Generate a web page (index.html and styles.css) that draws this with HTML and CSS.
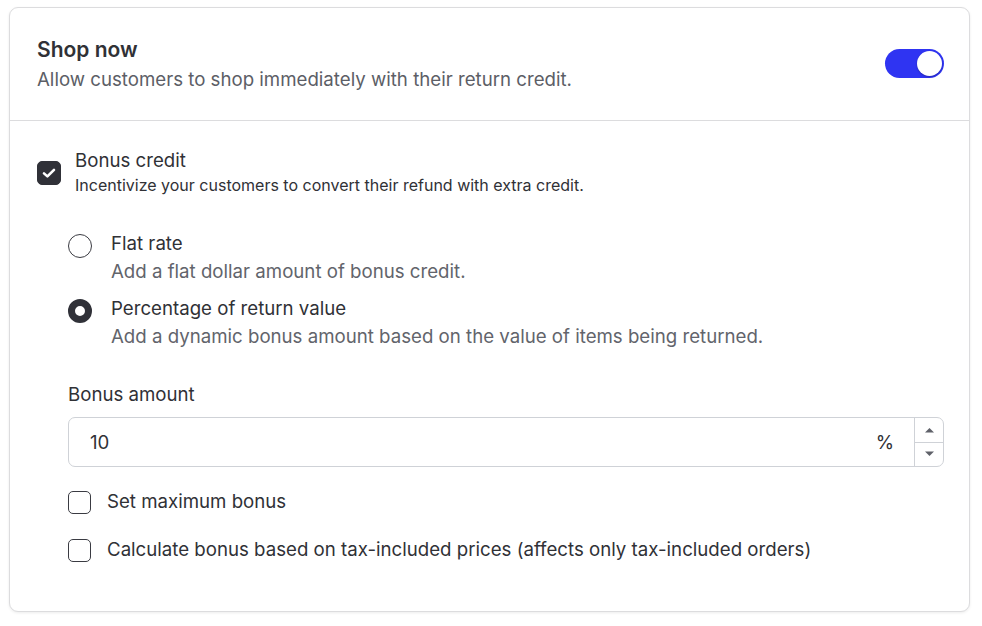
FILE: index.html
```html
<!DOCTYPE html>
<html>
<head>
<meta charset="utf-8">
<link rel="stylesheet" href="styles.css">
</head>
<body>
<div class="card">
  <div class="header">
    <div class="header-text">
      <div class="title">Shop now</div>
      <div class="subtitle">Allow customers to shop immediately with their return credit.</div>
    </div>
    <div class="toggle"><div class="knob"></div></div>
  </div>
  <div class="body">
    <div class="bonus-row">
      <div class="checkbox checked">
        <svg width="16" height="16" viewBox="0 0 16 16"><path d="M3 8.4 L6.4 11.4 L13 4.8" fill="none" stroke="#fff" stroke-width="2.6" stroke-linecap="round" stroke-linejoin="round"/></svg>
      </div>
      <div>
        <div class="label">Bonus credit</div>
        <div class="help">Incentivize your customers to convert their refund with extra credit.</div>
      </div>
    </div>
    <div class="nested">
      <div class="radios">
        <div class="radio-row">
          <div class="radio"></div>
          <div>
            <div class="label">Flat rate</div>
            <div class="desc">Add a flat dollar amount of bonus credit.</div>
          </div>
        </div>
        <div class="radio-row">
          <div class="radio selected"></div>
          <div>
            <div class="label">Percentage of return value</div>
            <div class="desc">Add a dynamic bonus amount based on the value of items being returned.</div>
          </div>
        </div>
      </div>
      <div class="field-label">Bonus amount</div>
      <div class="input">
        <div class="input-value">10</div>
        <div class="suffix">%</div>
        <div class="spinner">
          <div class="spin-btn"><svg width="11" height="6" viewBox="0 0 11 6"><path d="M1 5.5 L5.5 1 L10 5.5 Z" fill="#5f6169"/></svg></div>
          <div class="spin-btn bottom"><svg width="11" height="6" viewBox="0 0 11 6"><path d="M1 0.5 L5.5 5 L10 0.5 Z" fill="#5f6169"/></svg></div>
        </div>
      </div>
      <div class="checks">
        <div class="check-row"><div class="checkbox"></div><div class="label">Set maximum bonus</div></div>
        <div class="check-row"><div class="checkbox"></div><div class="label">Calculate bonus based on tax-included prices (affects only tax-included orders)</div></div>
      </div>
    </div>
  </div>
</div>
</body>
</html>
```

FILE: styles.css
```css
* { box-sizing: border-box; }
html, body { margin: 0; padding: 0; background: #ffffff; }
body {
  font-family: Inter, "Liberation Sans", sans-serif;
  color: #303136;
  padding: 7px 12px 14px 9px;
}
.card {
  border: 1px solid #dcdcde;
  border-radius: 9px;
  background: #fff;
  box-shadow: 0 1px 3px rgba(0,0,0,0.08);
}
.header {
  display: flex;
  align-items: center;
  justify-content: space-between;
  padding: 29px 25px 27px 27px;
  border-bottom: 1px solid #dcdcde;
}
.title {
  font-size: 21px;
  font-weight: 600;
  line-height: 26px;
}
.subtitle {
  font-size: 18.67px;
  line-height: 26px;
  color: #5c5e66;
  margin-top: 4px;
}
.toggle {
  width: 59px;
  height: 29px;
  border-radius: 15px;
  background: #2f34f2;
  display: flex;
  align-items: center;
  justify-content: flex-end;
  padding-right: 2px;
  margin-bottom: 3px;
}
.knob {
  width: 25px;
  height: 25px;
  border-radius: 50%;
  background: #fff;
  box-shadow: 0 1px 2px rgba(0,0,0,0.25);
}
.body {
  padding: 27px 25px 48px 27px;
}
.bonus-row {
  display: flex;
  align-items: center;
  gap: 14px;
}
.checkbox {
  width: 23px;
  height: 23px;
  border: 1.5px solid #3a3b42;
  border-radius: 5px;
  flex: none;
  display: flex;
  align-items: center;
  justify-content: center;
}
.checkbox.checked {
  width: 24px;
  height: 24px;
  background: #303138;
  border-color: #303138;
  margin-top: 1px;
}
.label {
  font-size: 18.67px;
  line-height: 26px;
  color: #303136;
}
.help {
  font-size: 16px;
  line-height: 22px;
  color: #303136;
  margin-top: 0px;
}
.nested {
  padding-left: 31px;
  margin-top: 35px;
}
.radios {
  display: flex;
  flex-direction: column;
  gap: 11px;
}
.radio-row {
  display: flex;
  align-items: flex-start;
  gap: 19px;
}
.radio {
  width: 24px;
  height: 24px;
  border-radius: 50%;
  border: 1.5px solid #3a3b42;
  flex: none;
  margin-top: 3px;
}
.radio.selected {
  border: 7.5px solid #303138;
  background: #fff;
}
.desc {
  font-size: 18.67px;
  line-height: 26px;
  color: #62646b;
  margin-top: 2px;
}
.field-label {
  font-size: 18.67px;
  line-height: 26px;
  margin-top: 32px;
}
.input {
  margin-top: 9px;
  height: 50px;
  border: 1px solid #cfd2d7;
  border-radius: 7px;
  display: flex;
  align-items: stretch;
}
.input-value {
  flex: 1;
  display: flex;
  align-items: center;
  padding-left: 21px;
  font-size: 18.67px;
}
.suffix {
  display: flex;
  align-items: center;
  font-size: 18.67px;
  padding-right: 20px;
}
.spinner {
  width: 29px;
  border-left: 1px solid #cfd2d7;
  display: flex;
  flex-direction: column;
}
.spin-btn {
  flex: 1;
  display: flex;
  align-items: center;
  justify-content: center;
}
.spin-btn.bottom {
  border-top: 1px solid #cfd2d7;
}
.checks {
  margin-top: 22px;
  display: flex;
  flex-direction: column;
  gap: 22px;
}
.check-row {
  display: flex;
  align-items: center;
  gap: 16px;
}
```
